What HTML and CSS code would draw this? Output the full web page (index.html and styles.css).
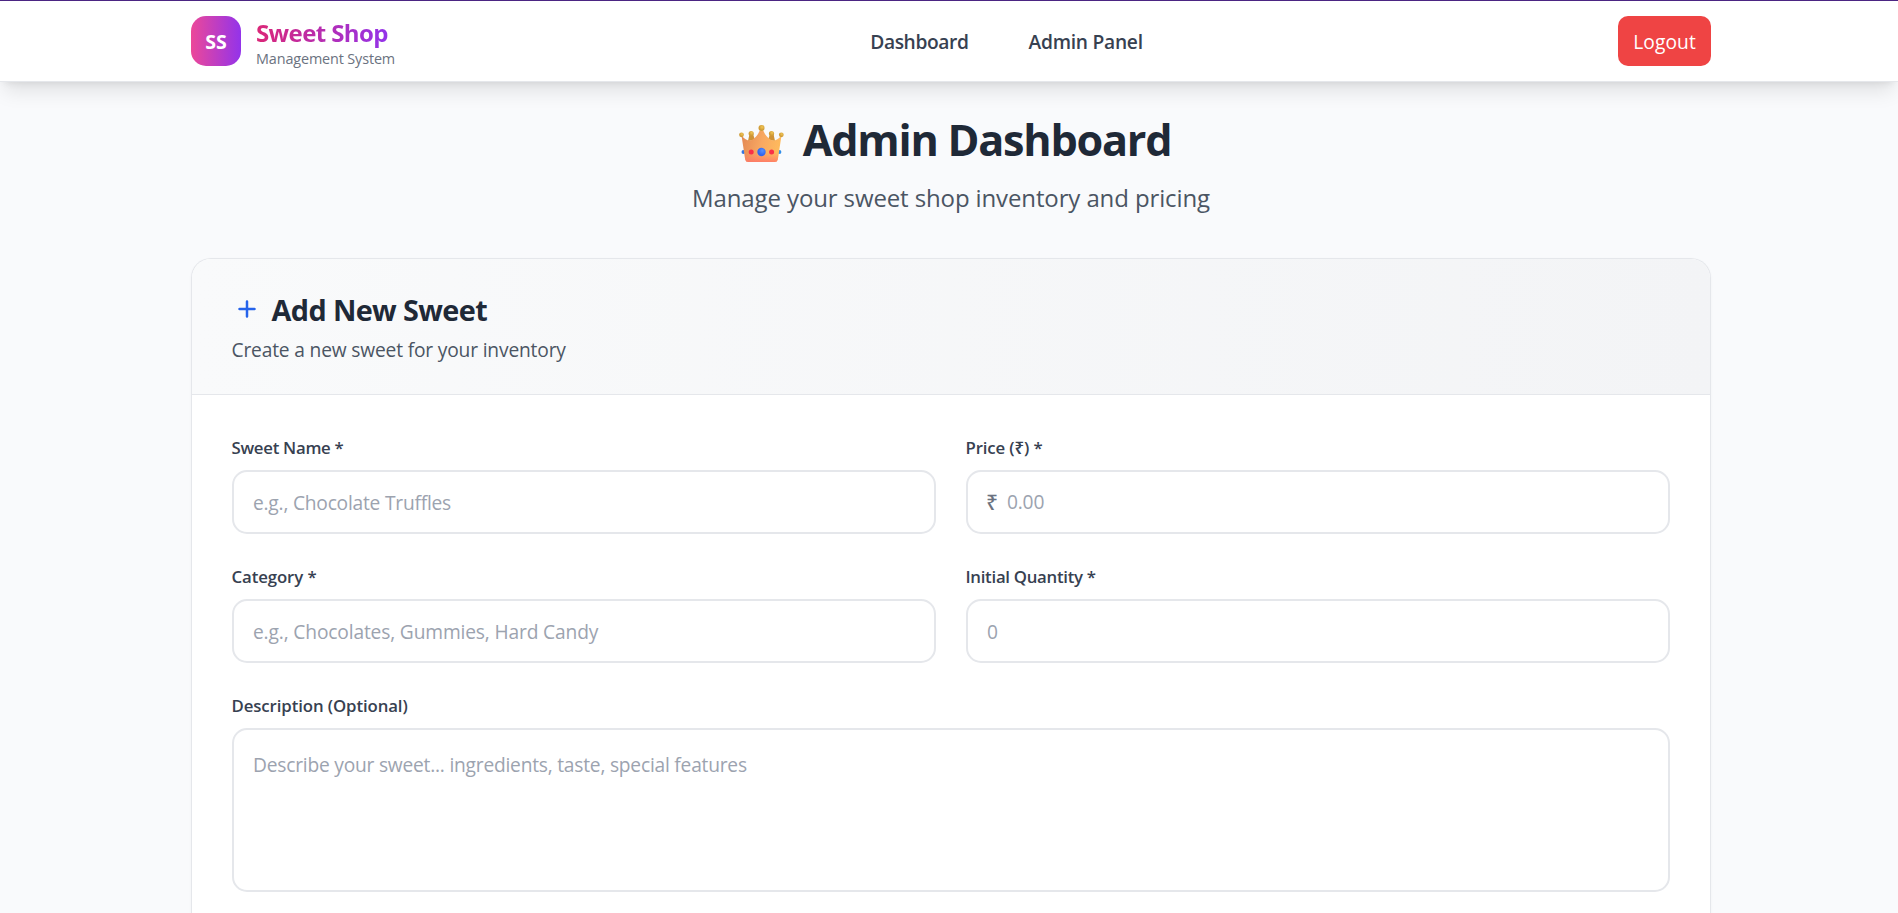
FILE: index.html
```html
<!DOCTYPE html>
<html lang="en">
<head>
<meta charset="utf-8">
<title>Sweet Shop</title>
<link rel="stylesheet" href="styles.css">
</head>
<body>
<header class="navbar">
  <div class="container navbar-inner">
    <div class="brand">
      <div class="logo">SS</div>
      <div class="brand-text">
        <div class="brand-name">Sweet Shop</div>
        <div class="brand-sub">Management System</div>
      </div>
    </div>
    <nav class="links">
      <a class="link-dashboard">Dashboard</a>
      <a class="link-admin">Admin Panel</a>
    </nav>
    <button class="logout">Logout</button>
  </div>
</header>
<main class="container">
  <div class="hero">
    <h1 class="title">
      <svg class="crown" viewBox="0 0 45 37" aria-hidden="true">
        <defs>
          <linearGradient id="gold" x1="0" y1="0.3" x2="1" y2="0.5"><stop offset="0" stop-color="#e48a55"/><stop offset="0.5" stop-color="#f8a862"/><stop offset="1" stop-color="#ffbc5c"/></linearGradient>
          <linearGradient id="base" x1="0" y1="0" x2="0" y2="1"><stop offset="0.7" stop-color="#ff7a68" stop-opacity="0"/><stop offset="1" stop-color="#ff7168" stop-opacity="0.8"/></linearGradient>
          <radialGradient id="ball" cx="0.6" cy="0.35"><stop offset="0" stop-color="#f0c555"/><stop offset="1" stop-color="#cf9a36"/></radialGradient>
          <radialGradient id="gem" cx="0.6" cy="0.35"><stop offset="0" stop-color="#5590ff"/><stop offset="1" stop-color="#3166ee"/></radialGradient>
        </defs>
        <path d="M9 16L10.500 9h3.500L16 15zM29 15L31 9h3.500L36 16z" fill="#cf9236"/>
        <circle cx="12.200" cy="8.500" r="2.600" fill="url(#ball)"/><circle cx="32.500" cy="8.500" r="2.600" fill="url(#ball)"/>
        <circle cx="4.400" cy="27" r="1.900" fill="#3275e4"/><circle cx="40.500" cy="27" r="1.900" fill="#328fea"/>
        <path d="M2.500 10.500Q8 17 13 15Q18 12 20.800 5.500h3.400Q27 12 32 15Q37 17 42.500 10.500L38.800 34.500Q38.300 37 35.800 37H9.200Q6.700 37 6.200 34.500z" fill="url(#gold)"/>
        <path d="M2.500 10.500Q8 17 13 15Q18 12 20.800 5.500h3.400Q27 12 32 15Q37 17 42.500 10.500L38.800 34.500Q38.300 37 35.800 37H9.200Q6.700 37 6.200 34.500z" fill="url(#base)"/>
        <circle cx="2.500" cy="9.800" r="2.400" fill="url(#ball)"/><circle cx="42.300" cy="9.800" r="2.400" fill="url(#ball)"/><circle cx="22.500" cy="3" r="3" fill="url(#ball)"/>
        <circle cx="12.200" cy="27" r="2.500" fill="#fa3048"/><circle cx="32.600" cy="27" r="2.500" fill="#fa3048"/>
        <circle cx="22.500" cy="27" r="4.200" fill="url(#gem)"/>
      </svg>
      <span>Admin Dashboard</span>
    </h1>
    <p class="subtitle">Manage your sweet shop inventory and pricing</p>
  </div>
  <section class="card">
    <div class="card-head">
      <h2 class="card-title">
        <svg class="plus" viewBox="0 0 24 24" fill="none" stroke="currentColor" stroke-width="2" stroke-linecap="round" aria-hidden="true"><path d="M12 6v12M6 12h12"/></svg>
        <span>Add New Sweet</span>
      </h2>
      <p class="card-sub">Create a new sweet for your inventory</p>
    </div>
    <form class="form">
      <div class="field">
        <label class="label ls-name" for="name">Sweet Name *</label>
        <input class="input" id="name" placeholder="e.g., Chocolate Truffles">
      </div>
      <div class="field">
        <label class="label ls-price" for="price">Price (₹) *</label>
        <div class="input price-box"><span class="rupee">₹</span><input class="price-input" id="price" placeholder="0.00"></div>
      </div>
      <div class="field">
        <label class="label ls-cat-label" for="category">Category *</label>
        <input class="input ls-category" id="category" placeholder="e.g., Chocolates, Gummies, Hard Candy">
      </div>
      <div class="field">
        <label class="label" for="qty">Initial Quantity *</label>
        <input class="input" id="qty" placeholder="0">
      </div>
      <div class="field wide">
        <label class="label ls-desc" for="desc">Description (Optional)</label>
        <textarea class="input area" id="desc" placeholder="Describe your sweet... ingredients, taste, special features"></textarea>
      </div>
    </form>
  </section>
</main>
</body>
</html>
```
FILE: styles.css
```css
* { box-sizing: border-box; margin: 0; padding: 0; }
html { height: 100%; overflow: hidden; }
body {
  height: 913px;
  overflow: hidden;
  display: flex;
  flex-direction: column;
  background: #f9fafc;
  color: #1f2937;
  font-family: "Open Sans", "Noto Sans", sans-serif;
  font-size: 19.2px;
}
.container { width: 1520px; margin: 0 0 0 191px; }
main.container { flex: 1; min-height: 0; display: flex; flex-direction: column; }
.navbar {
  position: relative;
  flex: none;
  height: 82px;
  background: #fff;
  border-top: 1px solid #4b2583;
  border-bottom: 1px solid #e5e7eb;
  box-shadow: 0 12.5px 18.75px -3.75px rgba(0,0,0,.1), 0 5px 7.5px -5px rgba(0,0,0,.1);
}
.navbar-inner { height: 80px; display: flex; align-items: center; justify-content: space-between; }
.brand { display: flex; align-items: center; gap: 15px; width: 204px; }
.logo {
  flex: none; width: 50px; height: 50px; border-radius: 15px;
  display: flex; align-items: center; justify-content: center;
  background: linear-gradient(to right, #ec4899, #9333ea);
  color: #fff; font-weight: 700; font-size: 19.5px; line-height: 50px; padding-top: 2px;
}
.brand-text { padding-top: 5px; }
.brand-name {
  font-weight: 700; font-size: 24px; line-height: 30px; letter-spacing: -.6px;
  width: max-content;
  background: linear-gradient(to right, #db2777, #9333ea);
  -webkit-background-clip: text; background-clip: text; color: transparent;
}
.brand-sub { margin-top: 1px; font-size: 14.4px; line-height: 20px; letter-spacing: -.13px; color: #6b7280; white-space: nowrap; }
.links { display: flex; gap: 60px; padding-top: 2px; color: #374151; font-weight: 600; line-height: 30px; }
.link-dashboard { letter-spacing: -.38px; }
.link-admin { letter-spacing: -.25px; }
.logout {
  width: 93px; height: 50px; border: 0; border-radius: 10px; padding-top: 2px;
  background: #ef4444; color: #fff;
  font: 500 19.2px/48px "Open Sans", sans-serif; letter-spacing: .1px;
}
.hero { flex: none; height: 176px; padding-top: 28px; display: flex; flex-direction: column; align-items: center; }
.title {
  display: flex; align-items: center; gap: 19px; padding-left: 8px;
  font-size: 43.2px; line-height: 60px; font-weight: 700; letter-spacing: -1.25px;
}
.crown { width: 45px; height: 37px; margin-top: 7px; }
.subtitle { margin-top: 8px; font-size: 24px; line-height: 40px; color: #4b5563; letter-spacing: -.12px; }
.card {
  flex: 1; min-height: 0; background: #fff;
  border: 1px solid #e5e7eb; border-bottom: 0; border-radius: 20px 20px 0 0; overflow: hidden;
  box-shadow: 0 1px 3px rgba(0,0,0,.04);
}
.card-head {
  height: 136px; padding: 31px 40px 0;
  background: linear-gradient(to right, #f9fafb, #f3f4f6);
  border-bottom: 1px solid #e5e7eb;
}
.card-title { display: flex; align-items: center; gap: 10px; margin-left: -.5px; font-size: 28.8px; line-height: 40px; letter-spacing: -.6px; }
.plus { width: 30px; height: 30px; margin-top: -2px; color: #2563eb; }
.card-sub { line-height: 30px; margin: 5px 0 0 -.5px; color: #4b5563; letter-spacing: -.17px; }
.form { padding: 40px 40px 0; display: grid; grid-template-columns: 1fr 1fr; gap: 30px; }
.field { display: flex; flex-direction: column; gap: 10px; }
.wide { grid-column: 1 / -1; }
.label { margin-left: -.5px; font-size: 16.8px; line-height: 25px; font-weight: 600; color: #374151; letter-spacing: -.28px; }
.ls-price { letter-spacing: -.13px; }
.ls-cat-label { letter-spacing: -.1px; }
.ls-desc { letter-spacing: -.1px; }
.input {
  width: 100%; height: 64px; padding: 0 19px;
  border: 2px solid #e5e7eb; border-radius: 15px; background: #fff; outline: 0;
  font: 400 19.2px/30px "Open Sans", "Noto Sans", sans-serif; letter-spacing: -.22px;
}
.input::placeholder, .price-input::placeholder { color: #9ca3af; opacity: 1; }
.ls-category { letter-spacing: -.15px; }
.price-box { display: flex; align-items: center; padding-left: 18px; }
.rupee { width: 21px; color: #6b7280; font-size: 21px; font-weight: 500; }
.price-input { flex: 1; border: 0; outline: 0; background: none; font: inherit; letter-spacing: -.2px; }
.area { height: 164px; padding: 20px 19px; resize: none; display: block; }
```
